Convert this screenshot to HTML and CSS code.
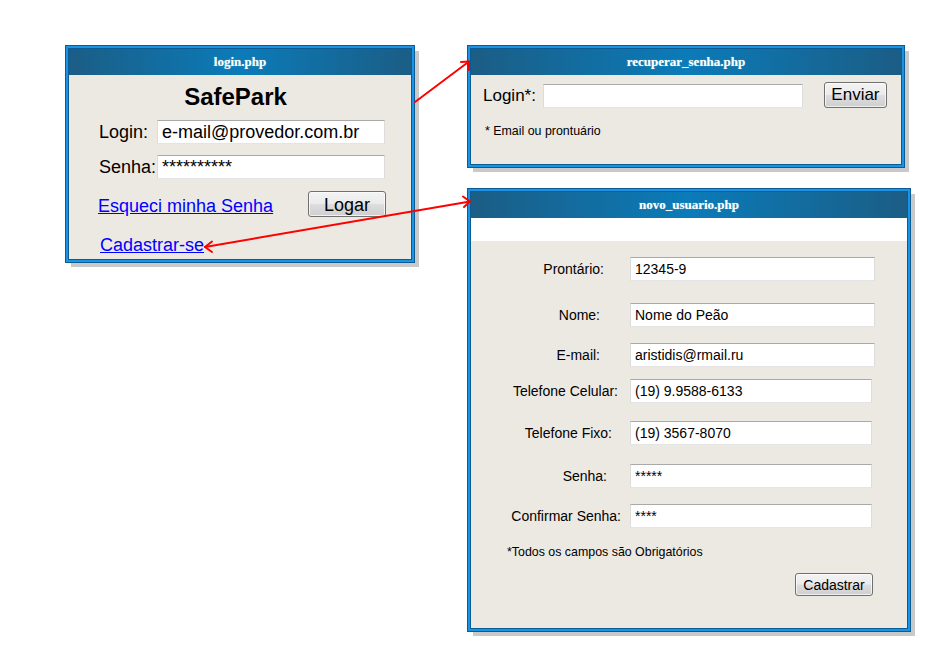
FILE: index.html
```html
<!DOCTYPE html>
<html lang="pt-BR">
<head>
<meta charset="utf-8">
<title>SafePark - telas</title>
<link rel="stylesheet" href="styles.css">
</head>
<body>
<div class="desk">

  <section class="win win-login">
    <header class="win-title">login.php</header>
    <div class="win-body login-body">
      <div class="brand">SafePark</div>
      <div class="lrow lrow-first">
        <label>Login:</label>
        <input class="field big" type="text" value="e-mail@provedor.com.br">
      </div>
      <div class="lrow lrow-second">
        <label>Senha:</label>
        <input class="field big" type="text" value="**********">
      </div>
      <div class="lactions">
        <a href="#" class="link">Esqueci minha Senha</a>
        <button class="btn btn-logar">Logar</button>
      </div>
      <a href="#" class="link signup">Cadastrar-se</a>
    </div>
  </section>

  <section class="win win-recover">
    <header class="win-title">recuperar_senha.php</header>
    <div class="win-body recover-body">
      <div class="rrow">
        <label>Login*:</label>
        <input class="field rinput" type="text" value="">
        <button class="btn btn-enviar">Enviar</button>
      </div>
      <p class="note rnote">* Email ou prontuário</p>
    </div>
  </section>

  <section class="win win-new">
    <header class="win-title">novo_usuario.php</header>
    <div class="strip"></div>
    <div class="win-body new-body">
      <div class="frow r-pront"><label>Prontário:</label><input class="field small wide" type="text" value="12345-9"></div>
      <div class="frow r-nome"><label>Nome:</label><input class="field small wide" type="text" value="Nome do Peão"></div>
      <div class="frow r-email"><label>E-mail:</label><input class="field small wide" type="text" value="aristidis@rmail.ru"></div>
      <div class="frow r-cel"><label>Telefone Celular:</label><input class="field small" type="text" value="(19) 9.9588-6133"></div>
      <div class="frow r-fixo"><label>Telefone Fixo:</label><input class="field small" type="text" value="(19) 3567-8070"></div>
      <div class="frow r-senha"><label>Senha:</label><input class="field small" type="text" value="*****"></div>
      <div class="frow r-conf"><label>Confirmar Senha:</label><input class="field small" type="text" value="****"></div>
      <p class="note nnote">*Todos os campos são Obrigatórios</p>
      <div class="nactions"><button class="btn btn-cad">Cadastrar</button></div>
    </div>
  </section>

  <svg class="arrows" width="945" height="651" viewBox="0 0 945 651" aria-hidden="true">
    <g fill="none" stroke="#ff0000" stroke-width="2" stroke-linecap="round" stroke-linejoin="round">
      <line x1="415" y1="102" x2="469" y2="61.5"/>
      <polyline points="461,62 469,61.5 469,70"/>
      <line x1="470" y1="201.5" x2="205" y2="247"/>
      <polyline points="463,196.5 470,201.5 464,207"/>
      <polyline points="212,241.5 205,247 212,252"/>
    </g>
  </svg>
</div>
</body>
</html>
```

FILE: styles.css
```css
* { box-sizing: border-box; }

html, body {
  margin: 0;
  padding: 0;
  background: #ffffff;
}

body {
  font-family: "Liberation Sans", Arial, sans-serif;
  color: #000;
}

.desk {
  position: relative;
  width: 945px;
  height: 651px;
  overflow: hidden;
}

/* window chrome */
.win {
  position: absolute;
  display: flex;
  flex-direction: column;
  border: 2px solid #1a93e4;
  outline: 1px solid #0b5b95;
  padding: 1px;
  background: #0b5b95;
  box-shadow: 5px 5px 0 #c9c9c9;
}

.win-title {
  height: 26px;
  flex: none;
  background: linear-gradient(to right, #1b5d85 0%, #0b7bb9 50%, #1b5d85 100%);
  color: #ffffff;
  font: bold 13px/26px "Liberation Serif", "Times New Roman", serif;
  text-align: center;
  text-shadow: 0 0 1px rgba(190, 255, 230, 0.6);
}

.win-body {
  flex: 1;
  background: #ece9e3;
}

.win-login  { left: 66px;  top: 46px;  width: 348px; height: 216px; }
.win-recover{ left: 468px; top: 46px;  width: 436px; height: 121px; }
.win-new    { left: 468px; top: 189px; width: 442px; height: 442px; }

/* inputs & buttons */
.field {
  display: block;
  height: 24px;
  margin: 0;
  padding: 0 4px;
  background: #ffffff;
  border: 1px solid;
  border-color: #a9a9a9 #dcdcdc #e4e4e4 #dcdcdc;
  font-family: "Liberation Sans", Arial, sans-serif;
  color: #000;
  outline: none;
}

.field.big { font-size: 18px; }
.field.small { font-size: 14px; width: 242px; }
.field.small.wide { width: 245px; }

.btn {
  display: block;
  margin: 0;
  padding: 0;
  border: 1px solid #707070;
  border-radius: 3px;
  background: linear-gradient(#f3f3f3 0%, #ebebeb 48%, #dddddd 52%, #cfcfcf 100%);
  font-family: "Liberation Sans", Arial, sans-serif;
  color: #000;
  box-shadow: inset 0 0 0 1px rgba(255,255,255,0.7);
}

.link {
  color: #0000ff;
  text-decoration: underline;
  font-size: 18px;
  line-height: 20px;
}

/* login window */
.login-body {
  display: flex;
  flex-direction: column;
  align-items: flex-start;
  padding-top: 8px;
}

.brand {
  align-self: stretch;
  font-weight: bold;
  font-size: 24px;
  line-height: 28px;
  text-align: center;
  padding-right: 9px;
}

.lrow {
  display: flex;
  align-items: center;
  margin-left: 30px;
}

.lrow label {
  width: 58px;
  font-size: 18px;
}

.lrow .field { width: 228px; }

.lrow-first { margin-top: 9px; }
.lrow-second { margin-top: 11px; }

.lactions {
  align-self: stretch;
  display: flex;
  align-items: center;
  justify-content: space-between;
  margin: 12px 25px 0 29px;
}

.lactions .link { margin-top: 3px; }

.btn-logar {
  width: 78px;
  height: 26px;
  padding-top: 2px;
  font-size: 18px;
}

.signup {
  margin: 18px 0 0 31px;
}

/* recover window */
.recover-body {
  padding: 7px 0 0 12px;
}

.rrow {
  display: flex;
  align-items: center;
}

.rrow label {
  font-size: 17px;
  margin-top: 1px;
}

.rinput {
  width: 260px;
  margin-left: 7px;
  margin-top: 2px;
}

.btn-enviar {
  width: 63px;
  height: 26px;
  margin-left: 21px;
  font-size: 17px;
}

.note {
  margin: 0;
  font-size: 12.4px;
  line-height: 14px;
}

.rnote { margin: 16px 0 0 2px; }

/* new user window */
.strip {
  height: 23px;
  flex: none;
  background: #ffffff;
}

.new-body {
  padding-top: 16px;
}

.frow {
  display: flex;
  align-items: center;
}

.frow label {
  width: 151px;
  margin-right: 8px;
  text-align: right;
  font-size: 14px;
}

.r-pront label { padding-right: 18px; }
.r-nome  { margin-top: 22px; }
.r-nome label { padding-right: 22px; }
.r-email { margin-top: 16px; }
.r-email label { padding-right: 22px; }
.r-cel   { margin-top: 12px; }
.r-cel label { padding-right: 4px; }
.r-fixo  { margin-top: 18px; }
.r-fixo label { padding-right: 10px; }
.r-senha { margin-top: 19px; }
.r-senha label { padding-right: 15px; }
.r-conf  { margin-top: 16px; }
.r-conf label { padding-right: 1px; }

.nnote { margin: 17px 0 0 36px; }

.nactions {
  display: flex;
  justify-content: flex-end;
  margin: 14px 34px 0 0;
}

.btn-cad {
  width: 78px;
  height: 23px;
  font-size: 14px;
}

/* overlay arrows */
.arrows {
  position: absolute;
  left: 0;
  top: 0;
  pointer-events: none;
}
```
